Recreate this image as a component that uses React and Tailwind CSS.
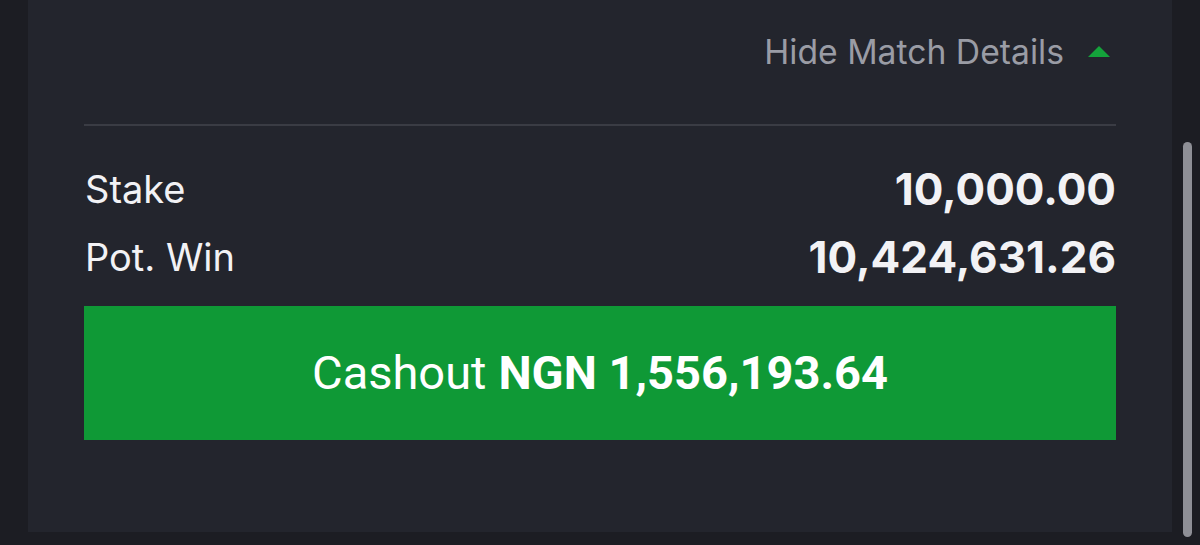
import React from 'react';

export default function App() {
  return (
    <div
      className="flex h-[545px] w-[1200px] overflow-hidden bg-[#1c1d23]"
      style={{ fontFamily: 'Inter, "Noto Sans", sans-serif' }}
    >
      <div className="ml-[28px] flex h-[532px] w-[1144px] flex-col bg-[#23252d] px-[56px]">
        {/* toggle */}
        <div className="flex h-[104px] items-center justify-end pr-[6px] pt-[1px]">
          <span className="text-[33.7px] text-[#9a9ca5]">Hide Match Details</span>
          <svg className="ml-[24px] mt-[-2px]" width="22" height="11" viewBox="0 0 22 11">
            <polygon points="11,0 22,11 0,11" fill="#14a33b" />
          </svg>
        </div>
        <div className="mt-[20px] h-[2px] bg-[#3a3c44]" />

        {/* amounts */}
        <div className="mt-[35px] flex flex-col gap-[12px]">
          <div className="flex h-[56px] items-center justify-between text-[#f2f2f5]">
            <span className="pl-[1px] text-[38px]">Stake</span>
            <span className="text-[44px] font-bold">10,000.00</span>
          </div>
          <div className="flex h-[56px] items-center justify-between text-[#f2f2f5]">
            <span className="pl-[1px] text-[38px]">Pot. Win</span>
            <span className="text-[44px] font-bold">10,424,631.26</span>
          </div>
        </div>

        {/* cashout */}
        <button
          type="button"
          className="mt-[21px] flex h-[134px] w-full items-center justify-center bg-[#0f9936] text-[47px] text-white"
          style={{ fontFamily: 'Roboto, "Noto Sans", sans-serif' }}
        >
          Cashout <span className="ml-[12px] font-bold">NGN 1,556,193.64</span>
        </button>
      </div>

      {/* scrollbar */}
      <div className="ml-[11px] mt-[142px] h-[395px] w-[9px] rounded-full bg-[#8e8f96]" />
    </div>
  );
}
